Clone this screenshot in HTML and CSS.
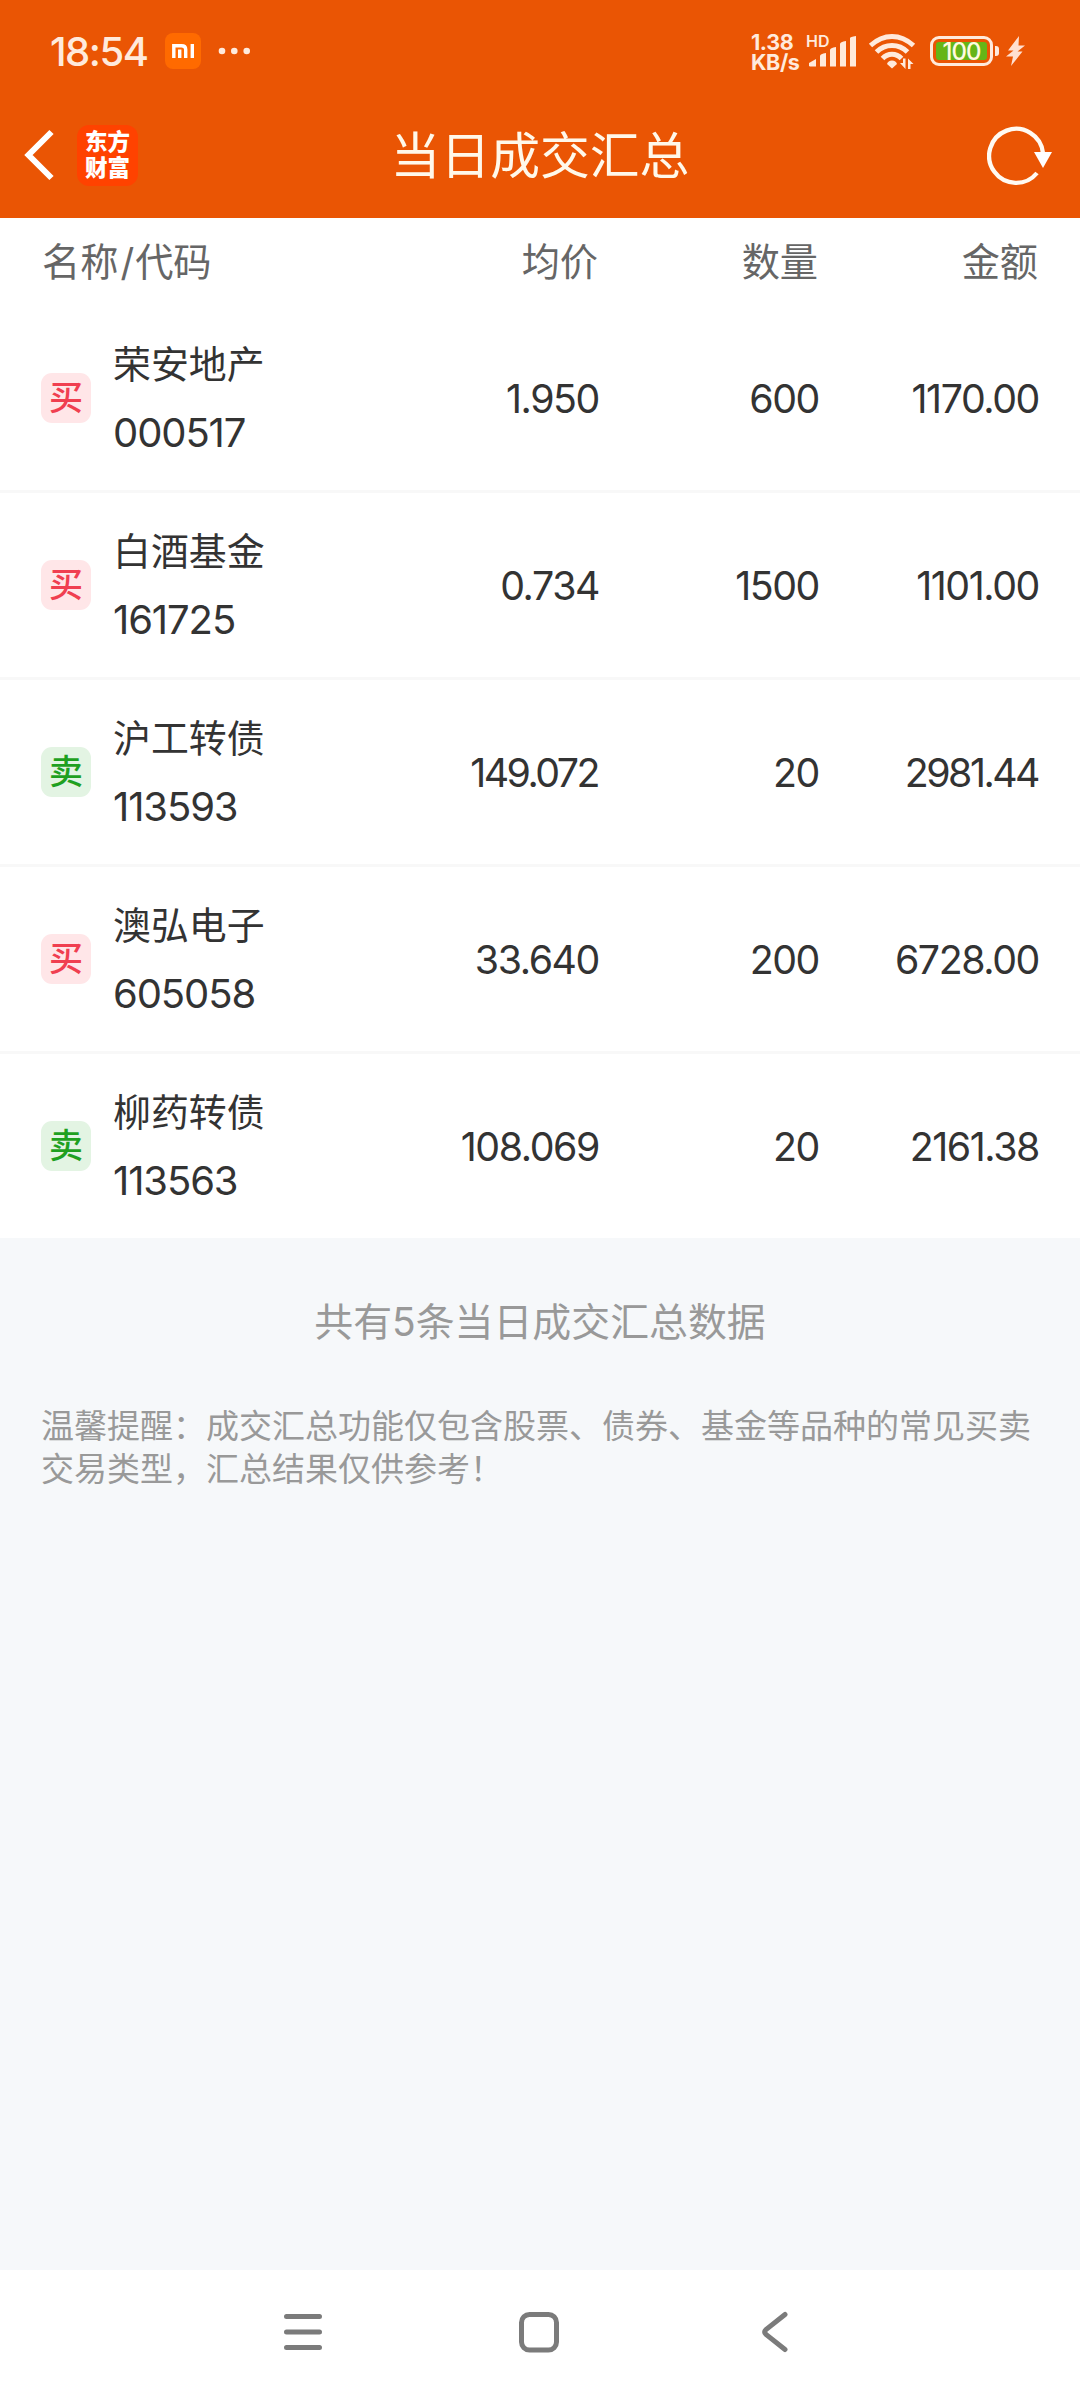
FILE: index.html
```html
<!DOCTYPE html>
<html lang="zh-CN">
<head>
<meta charset="utf-8">
<title>当日成交汇总</title>
<link rel="stylesheet" href="styles.css">
</head>
<body>
<div class="screen">
  <header class="top">
    <div class="status">
      <span class="clock">18:54</span>
      <svg class="mi" width="36" height="36" viewBox="0 0 36 36"><rect width="36" height="36" rx="8" fill="#ff6a00"/><path d="M8.800 25V12.800H16.500Q20.700 12.800 20.700 16.500V25M14.700 16.500V25M27.300 11V25" fill="none" stroke="#fff" stroke-width="3.400"/></svg>
      <svg class="dots" width="34" height="10" viewBox="0 0 34 10" fill="#ffeadc"><circle cx="4" cy="5" r="3.300"/><circle cx="16.300" cy="5" r="3.300"/><circle cx="28.700" cy="5" r="3.300"/></svg>
      <div class="speed"><span>1.38</span><span>KB/s</span></div>
      <div class="signal">
        <span class="hd">HD</span>
        <svg width="50" height="36" viewBox="0 0 50 36" fill="#ffeadc"><path d="M1 33V30L8 26V33.500H2Z"/><path d="M12 33V23Q12 21 18 20V33.500H12Z"/><path d="M22 33V17Q22 15 28 14V33.500H22Z"/><path d="M32 33V11Q32 9 38 8V33.500H32Z"/><path d="M42 33V5Q42 4 48 3V33.500H42Z"/></svg>
      </div>
      <svg class="wifi" width="48" height="36" viewBox="0 0 48 36"><g fill="none" stroke="#ffeadc" stroke-width="5"><path d="M2.500 12.500Q12.500 3.500 24 3.500T45.500 12.500"/><path d="M8.500 19Q15 12.500 24 12.500T39.500 19"/><path d="M14.500 25.500Q18.500 21.200 24 21.200T33.500 25.500"/></g><path d="M19 31Q20 27.500 24 27.500T29 31L24 35.500Z" fill="#ffeadc"/><path d="M37.500 25.500V36L32 30H35V25.500ZM40 36V25.500L45.500 31H42.500V36Z" fill="#ffeadc"/></svg>
      <div class="battery"><span class="charge">100</span></div>
      <i class="nub"></i>
      <svg class="bolt" width="20" height="30" viewBox="0 0 20 30"><path d="M13 0L2 14.500H7.500L0 20.500H7L5 30L16.500 15.500H11.500L19 9.500H12.500Z" fill="#ffe0d2"/></svg>
    </div>
    <div class="bar">
      <svg class="back" width="32" height="52" viewBox="0 0 32 52"><path d="M27.500 3L4.500 26L27.500 49" fill="none" stroke="#fff" stroke-width="6"/></svg>
      <div class="logo"><span>东方</span><span>财富</span></div>
      <h1>当日成交汇总</h1>
      <svg class="refresh" width="66" height="60" viewBox="0 0 66 60"><path d="M50 48A27 27 0 1 1 56 28" fill="none" stroke="#fffaf2" stroke-width="4.300"/><path d="M47 27H65L56 43Z" fill="#fff"/></svg>
    </div>
  </header>
  <main>
    <div class="grid head"><span>名称<span class="slash">/</span>代码</span><span>均价</span><span>数量</span><span>金额</span></div>
    <div class="grid row"><div class="stock"><b class="tag buy">买</b><div><p>荣安地产</p><p class="code">000517</p></div></div><span>1.950</span><span>600</span><span>1170.00</span></div>
    <div class="grid row"><div class="stock"><b class="tag buy">买</b><div><p>白酒基金</p><p class="code">161725</p></div></div><span>0.734</span><span>1500</span><span>1101.00</span></div>
    <div class="grid row"><div class="stock"><b class="tag sell">卖</b><div><p>沪工转债</p><p class="code">113593</p></div></div><span class="snug">149.072</span><span>20</span><span class="snug">2981.44</span></div>
    <div class="grid row"><div class="stock"><b class="tag buy">买</b><div><p>澳弘电子</p><p class="code">605058</p></div></div><span>33.640</span><span>200</span><span>6728.00</span></div>
    <div class="grid row"><div class="stock"><b class="tag sell">卖</b><div><p>柳药转债</p><p class="code">113563</p></div></div><span>108.069</span><span>20</span><span>2161.38</span></div>
  </main>
  <section class="notes">
    <p class="count">共有<span class="num">5</span>条当日成交汇总数据</p>
    <p class="tip">温馨提醒：成交汇总功能仅包含股票、债券、基金等品种的常见买卖<br>交易类型，汇总结果仅供参考！</p>
  </section>
  <nav class="nav">
    <svg width="40" height="42" viewBox="0 0 40 42"><path d="M3.500 5.500H36.500M3.500 21H36.500M3.500 36.500H36.500" fill="none" stroke="#7b7b7b" stroke-width="5" stroke-linecap="round"/></svg>
    <svg width="42" height="42" viewBox="0 0 42 42"><rect x="3.500" y="3.500" width="35" height="35.500" rx="8" fill="none" stroke="#7b7b7b" stroke-width="5"/></svg>
    <svg width="28" height="42" viewBox="0 0 28 42"><path d="M24 3.500L5 18.500Q2.500 21 5 23.500L24 38.500" fill="none" stroke="#7b7b7b" stroke-width="5" stroke-linecap="round"/></svg>
  </nav>
</div>
</body>
</html>
```
FILE: styles.css
```css
* { box-sizing: border-box; }
body, p, h1 { margin: 0; }
svg { display: block; flex: none; }
body {
  font-family: Inter, "Noto Sans CJK SC", sans-serif;
  color: #333;
}
.screen {
  width: 1080px;
  height: 2400px;
  display: flex;
  flex-direction: column;
  background: #f6f8fa;
}
.top { height: 218px; background: #ea5504; color: #fff; }
.status {
  height: 102px;
  display: flex;
  align-items: center;
  padding-left: 50px;
  color: #ffeadc;
}
.clock { width: 115px; font-size: 40px; font-weight: 500; letter-spacing: -1.500px; white-space: nowrap; }
.dots { margin-left: 17px; }
.speed {
  width: 57px;
  margin-left: 499px;
  margin-top: 2px;
  display: flex;
  flex-direction: column;
  font-size: 21.500px;
  font-weight: 700;
  line-height: 20px;
  letter-spacing: -0.4px;
}
.signal { position: relative; width: 50px; height: 36px; }
.hd { position: absolute; left: -2px; top: 0; font-size: 16px; line-height: 17px; font-weight: 600; }
.wifi { margin-left: 10px; }
.battery {
  width: 63px;
  height: 30px;
  margin-left: 14px;
  padding: 3px;
  border: 3px solid #ffeadc;
  border-radius: 9px;
}
.charge {
  display: block;
  height: 18px;
  border-radius: 3px;
  background: #65b517;
  color: #fffbe0;
  font-size: 24px;
  font-weight: 500;
  line-height: 19px;
  text-align: center;
  letter-spacing: -1px;
}
.nub { width: 4px; height: 10px; margin-left: 2px; border-radius: 0 3px 3px 0; background: #ffeadc; }
.bolt { margin-left: 7px; }
.bar { height: 106px; display: grid; grid-template-columns: 77px 263px 400px 1fr; align-items: center; }
.back { margin-left: 24px; }
.logo {
  width: 61px;
  height: 61px;
  display: flex;
  flex-direction: column;
  align-items: center;
  justify-content: center;
  border-radius: 12px;
  background: #ff4200;
  font-size: 22.500px;
  font-weight: 900;
  line-height: 26px;
}
h1 { padding-bottom: 6px; font-size: 49.800px; font-weight: 400; text-align: center; white-space: nowrap; color: #fff8ea; }
.refresh { margin-left: 247px; }
main { background: #fff; font-size: 39.300px; }
.grid {
  display: grid;
  grid-template-columns: 340px 220px 220px 220px;
  align-items: center;
  padding: 0 40px;
}
.grid > span { text-align: right; }
.head { height: 88px; padding-bottom: 5px; font-size: 38.200px; color: #666; }
.head > span { padding-right: 2px; }
.head > span:first-child { text-align: left; padding-left: 2px; }
.slash { padding: 0 1px 0 2px; }
.row { height: 187px; border-bottom: 3px solid #f8f8f8; }
.row:last-child { height: 184px; border-bottom: 0; }
.row > span { padding-right: 1px; letter-spacing: -1.400px; }
.row > .snug { letter-spacing: -2.500px; padding-right: 2px; }
.stock { display: flex; align-items: center; }
.stock p { font-size: 37.900px; line-height: 67px; }
.stock .code { font-size: 40px; letter-spacing: -1.100px; line-height: 69px; margin-bottom: -2px; }
.tag {
  width: 50px;
  height: 50px;
  margin: 0 22px 0 1px;
  border-radius: 11px;
  font-size: 34px;
  font-weight: 500;
  line-height: 50px;
  text-align: center;
}
.buy { background: #ffe6e8; color: #f03f50; }
.sell { background: #e3f4e3; color: #1fa01f; }
.notes { flex: 1; color: #999; }
.count { margin-top: 56px; font-size: 38.900px; line-height: 56px; text-align: center; }
.tip { margin: 55px 0 0 41px; font-size: 33px; line-height: 43px; }
.nav {
  height: 130px;
  display: flex;
  align-items: flex-start;
  padding: 41px 0 0 283px;
  background: #fff;
}
.nav svg:nth-child(2) { margin-left: 195px; }
.nav svg:nth-child(3) { margin-left: 201px; }
```
